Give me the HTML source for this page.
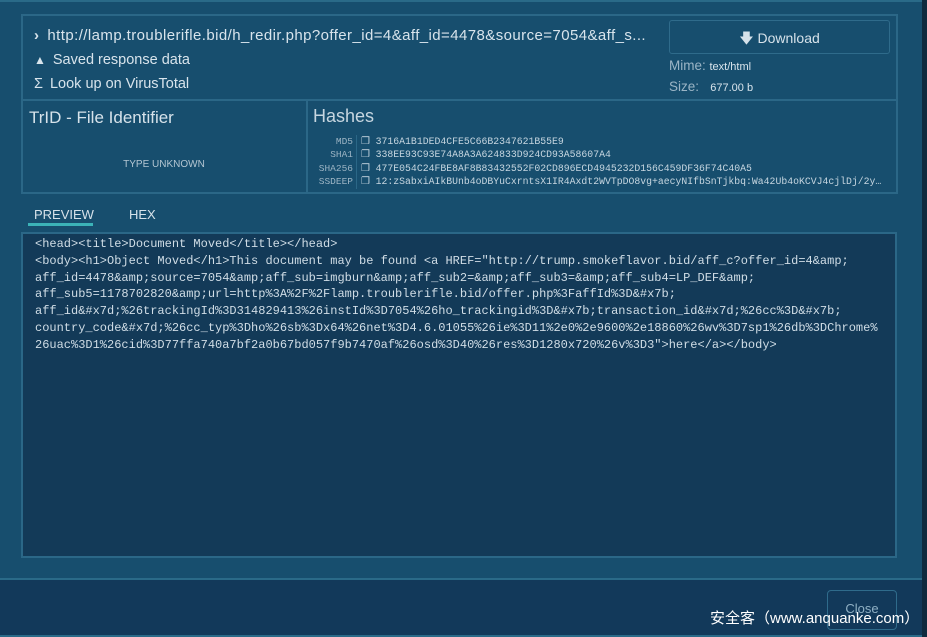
<!DOCTYPE html>
<html><head><meta charset="utf-8"><style>
*{margin:0;padding:0;box-sizing:border-box}
body{width:927px;height:635px;background:#0f2a3e;font-family:"Liberation Sans",sans-serif;color:#d6e2ea;position:relative;overflow:hidden}
.dlg{position:absolute;left:0;top:0;width:922px;height:635px;background:#174e6e;border-top:2px solid #2a6a88}
.box{position:absolute;border:2px solid #2b6787}
.mono{font-family:"Liberation Mono",monospace}
.footer{position:absolute;left:0;top:576px;width:922px;height:59px;background:#12395a;border-top:2px solid #2a6a88;border-bottom:2px solid #2a6a88}
.row{position:absolute;left:34px;font-size:14.5px;color:#d8e4ec;white-space:nowrap}
</style></head><body>
<div class="dlg">
 <div class="box" style="left:21px;top:12px;width:877px;height:180px"></div>
 <div style="position:absolute;left:22px;top:97px;width:875px;height:2px;background:#2b6787"></div>
 <div style="position:absolute;left:306px;top:99px;width:2px;height:92px;background:#2b6787"></div>
 <div class="row" style="top:25px;letter-spacing:0.42px;font-size:15px"><span style="font-weight:bold;margin-right:8px">&#x203A;</span>http://lamp.troublerifle.bid/h_redir.php?offer_id=4&amp;aff_id=4478&amp;source=7054&amp;aff_s...</div>
 <div class="row" style="top:50px"><span style="font-size:12px;margin-right:7px">&#9650;</span>Saved response data</div>
 <div class="row" style="top:74px"><span style="margin-right:7px">&#931;</span>Look up on VirusTotal</div>
 <div style="position:absolute;left:669px;top:18px;width:221px;height:34px;border:1px solid #2f6b8b;border-radius:3px;text-align:center;line-height:34px;font-size:14px">&#129095; Download</div>
 <div style="position:absolute;left:669px;top:56px;font-size:13.5px;color:#9bb5c6">Mime: <span style="font-size:11px;color:#d8e4ec">text/html</span></div>
 <div style="position:absolute;left:669px;top:77px;font-size:13.5px;color:#9bb5c6">Size: &nbsp;&nbsp;<span style="font-size:11px;color:#d8e4ec">677.00 b</span></div>
 <div style="position:absolute;left:29px;top:106px;font-size:17px">TrID - File Identifier</div>
 <div style="position:absolute;left:22px;width:284px;top:157px;text-align:center;font-size:10px;color:#b4c6d2">TYPE UNKNOWN</div>
 <div style="position:absolute;left:313px;top:104px;font-size:18px;color:#c6d6e0">Hashes</div>
 <div class="mono" style="position:absolute;left:308px;top:133px;width:45px;text-align:right;font-size:9.5px;line-height:13.3px;color:#9cb4c4">MD5<br>SHA1<br>SHA256<br>SSDEEP</div>
 <div style="position:absolute;left:356px;top:133px;width:1px;height:54px;background:#2b6787"></div>
 <div class="mono" style="position:absolute;left:361px;top:133px;font-size:9.8px;line-height:13.3px;color:#c6d6e0;white-space:nowrap">&#10064; 3716A1B1DED4CFE5C66B2347621B55E9<br>&#10064; 338EE93C93E74A8A3A624833D924CD93A58607A4<br>&#10064; 477E054C24FBE8AF8B83432552F02CD896ECD4945232D156C459DF36F74C40A5<br>&#10064; 12:zSabxiAIkBUnb4oDBYuCxrntsX1IR4Axdt2WVTpDO8vg+aecyNIfbSnTjkbq:Wa42Ub4oKCVJ4cjlDj/2y…</div>
 <div style="position:absolute;left:34px;top:205px;font-size:13px">PREVIEW</div>
 <div style="position:absolute;left:28px;top:221px;width:65px;height:3px;background:#3bb3b8"></div>
 <div style="position:absolute;left:129px;top:205px;font-size:13px">HEX</div>
 <div style="position:absolute;left:21px;top:230px;width:876px;height:326px;background:#133a58;border:2px solid #2b6787"></div>
 <pre class="mono" style="position:absolute;left:35px;top:234px;font-size:12px;line-height:16.8px;color:#d0dde6">&lt;head&gt;&lt;title&gt;Document Moved&lt;/title&gt;&lt;/head&gt;
&lt;body&gt;&lt;h1&gt;Object Moved&lt;/h1&gt;This document may be found &lt;a HREF="http://trump.smokeflavor.bid/aff_c?offer_id=4&amp;amp;
aff_id=4478&amp;amp;source=7054&amp;amp;aff_sub=imgburn&amp;amp;aff_sub2=&amp;amp;aff_sub3=&amp;amp;aff_sub4=LP_DEF&amp;amp;
aff_sub5=1178702820&amp;amp;url=http%3A%2F%2Flamp.troublerifle.bid/offer.php%3FaffId%3D&amp;#x7b;
aff_id&amp;#x7d;%26trackingId%3D314829413%26instId%3D7054%26ho_trackingid%3D&amp;#x7b;transaction_id&amp;#x7d;%26cc%3D&amp;#x7b;
country_code&amp;#x7d;%26cc_typ%3Dho%26sb%3Dx64%26net%3D4.6.01055%26ie%3D11%2e0%2e9600%2e18860%26wv%3D7sp1%26db%3DChrome%
26uac%3D1%26cid%3D77ffa740a7bf2a0b67bd057f9b7470af%26osd%3D40%26res%3D1280x720%26v%3D3"&gt;here&lt;/a&gt;&lt;/body&gt;</pre>
 <div class="footer"></div>
 <div style="position:absolute;left:827px;top:588px;width:70px;height:40px;border:1px solid #2f6b8b;border-radius:4px;text-align:center;line-height:36px;font-size:13px;color:#8fb0c4">Close</div>
 <div style="position:absolute;left:710px;top:605px;font-size:15px;color:#fff;font-family:'Liberation Sans','Noto Sans CJK SC',sans-serif;white-space:nowrap">安全客（www.anquanke.com）</div>
</div>
</body></html>
